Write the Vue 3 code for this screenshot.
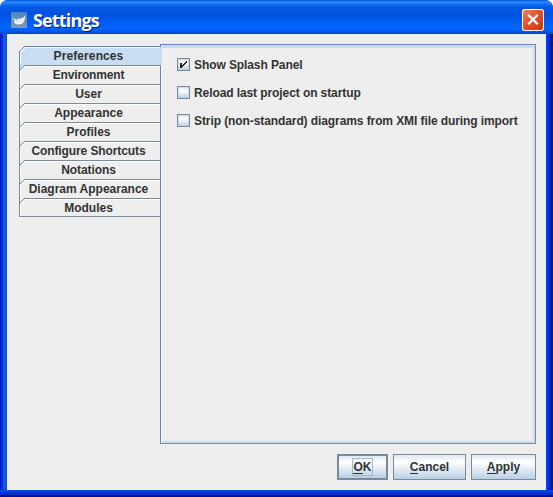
<script setup>
import { ref } from 'vue'

const tabs = [
  { name: 'Preferences', track: 0.1 },
  { name: 'Environment', track: -0.17 },
  { name: 'User', track: 0 },
  { name: 'Appearance', track: 0 },
  { name: 'Profiles', track: 0 },
  { name: 'Configure Shortcuts', track: -0.1 },
  { name: 'Notations', track: -0.1 },
  { name: 'Diagram Appearance', track: 0 },
  { name: 'Modules', track: 0 }
]
const active = ref(0)
const options = ref([
  { label: 'Show Splash Panel', on: true },
  { label: 'Reload last project on startup', on: false },
  { label: 'Strip (non-standard) diagrams from XMI file during import', on: false }
])
const buttons = [
  { key: 'O', rest: 'K', kind: 'ok' },
  { key: 'C', rest: 'ancel', kind: 'cancel' },
  { key: 'A', rest: 'pply', kind: 'apply' }
]
const isLast = i => i === tabs.length - 1
</script>

<template>
  <div class="window">
    <header class="titlebar">
      <svg class="app-icon" width="16" height="16" viewBox="0 0 16 16">
        <defs>
          <linearGradient id="ig" x1="0" y1="0" x2="0" y2="1">
            <stop offset="0" stop-color="#4d83c0" />
            <stop offset="1" stop-color="#7d9cb8" />
          </linearGradient>
        </defs>
        <rect width="16" height="16" rx="1" fill="url(#ig)" />
        <path d="M1 5.5 4 7 6 8.5 7 6 9 7.5 10.5 5.5 11.5 6.5 14.5 3 13.5 8.5 11.5 11.5 8 12.5 4.5 12 2.5 9.5 4 9Z" fill="#f4f6f5" />
        <path d="M5 9.5 8 10 11 8" stroke="#c4d2dc" stroke-width=".8" fill="none" />
      </svg>
      <h1>Settings</h1>
      <button class="close" aria-label="Close">
        <svg width="22" height="22" viewBox="0 0 22 22">
          <path d="M6.2 5.7 15.8 15.3M15.8 5.7 6.2 15.3" stroke="#fff" stroke-width="2.3" />
        </svg>
      </button>
    </header>
    <main class="client">
      <div class="body">
        <nav class="tabs">
          <div v-for="(t, i) in tabs" :key="t.name" class="tab" :class="{ active: i === active }" @click="active = i">
            <svg class="edge" width="143" height="19" viewBox="0 0 143 19" shape-rendering="crispEdges">
              <path v-if="i === active" class="fill" d="M1 24V6L6 1H143V19H6Z" />
              <path v-else class="fill" d="M1 19V6L6 1H141V19Z" />
              <path class="hi" d="M1.5 18V6.5L6.5 1.5H141" />
              <path class="line" :d="isLast(i) ? 'M141 18.5H.5V5.5L5.5 .5H141' : 'M.5 24V5.5L5.5 .5H141'" />
            </svg>
            <span :style="{ letterSpacing: t.track + 'px' }">{{ t.name }}</span>
          </div>
        </nav>
        <section class="panel">
          <label v-for="o in options" :key="o.label" class="option" @click="o.on = !o.on">
            <span class="box">
              <svg v-if="o.on" width="13" height="13" viewBox="0 0 13 13" shape-rendering="crispEdges">
                <path d="M3 5H5V7H6V6H7V5H8V4H9V3H10V5H9V6H8V7H7V8H6V9H5V10H3Z" fill="#222" />
              </svg>
            </span>
            <span class="text">{{ o.label }}</span>
          </label>
        </section>
      </div>
      <footer class="actions">
        <button v-for="b in buttons" :key="b.kind" class="btn" :class="b.kind">
          <span class="caption"><span class="key">{{ b.key }}</span>{{ b.rest }}</span>
        </button>
      </footer>
    </main>
  </div>
</template>

<style>
body {
  background: #fff;
}
</style>

<style scoped>
* {
  box-sizing: border-box;
}
.window {
  width: 553px;
  height: 497px;
  padding: 0 7px 7px;
  border-radius: 8px 8px 0 0;
  background:
    linear-gradient(to bottom, #0046e8 0 2px, #0030c8 2px 5px, #001292 5px 7px) 0 100% / 100% 7px no-repeat,
    linear-gradient(to right, #0011c0 0 1px, #0731d8 1px 3px, #1058e8 3px 6px, #0a4be0 6px) 0 34px / 7px 100% no-repeat,
    linear-gradient(to right, #0040f0 0 2px, #0030d0 2px 4px, #001698 4px 7px) 100% 34px / 7px 100% no-repeat,
    #0552e4;
  font: bold 12px/14px "Liberation Sans", Arial, sans-serif;
  color: #333;
  overflow: hidden;
}
.titlebar {
  height: 34px;
  margin: 0 -7px;
  padding: 6px 9px 0 11px;
  display: flex;
  align-items: center;
  background: linear-gradient(to bottom, #0550d8 0, #2c8cff 2px, #1272f8 4px, #0358e2 7px, #0052de 14px, #005cf2 22px, #0066ff 28px, #005cf0 31px, #003ebc 34px);
}
h1 {
  flex: 1;
  margin: 0 0 0 6px;
  font: bold 18px/26px "Open Sans", sans-serif;
  letter-spacing: -0.85px;
  color: #fff;
  text-shadow: 1px 1px 0 #0a1883;
}
.close {
  width: 22px;
  height: 22px;
  padding: 0;
  border: 0;
  border-radius: 3px;
  background: linear-gradient(135deg, #ee8a6a, #e2512b 45%, #c93807);
  box-shadow: inset 0 0 0 1px #fff;
}
.close svg {
  display: block;
}
.client {
  height: 456px;
  padding: 10px 10px 10px 12px;
  background: #eee;
}
.body {
  display: flex;
  height: 400px;
}
.tabs {
  width: 141px;
  padding-top: 2px;
}
.tab {
  position: relative;
  width: 141px;
  height: 19px;
  padding: 3px 2px 0 0;
  text-align: center;
}
.tab span {
  position: relative;
}
.edge {
  position: absolute;
  left: 0;
  top: 0;
  overflow: visible;
}
.fill {
  fill: #eee;
}
.hi {
  fill: none;
  stroke: #fff;
}
.line {
  fill: none;
  stroke: #7a8a99;
}
.active .fill {
  fill: #c8ddf2;
}
.active .line {
  stroke: #6382bf;
}
.panel {
  width: 376px;
  padding: 12px 0 0 16px;
  border: 1px solid #7a8a99;
  border-top-color: #6382bf;
  border-left-color: #6382bf;
  box-shadow: inset 1px 0 #fff, inset -2px -2px #c8ddf2, inset 0 3px #c8ddf2;
}
.option {
  display: flex;
  align-items: center;
  height: 15px;
  margin-bottom: 13px;
  letter-spacing: -0.09px;
}
.box {
  width: 13px;
  height: 13px;
  margin-right: 4px;
  border: 1px solid #7a8a99;
  background: linear-gradient(#dde8f3, #fff 35%, #b8cfe5);
  box-shadow: inset 0 0 0 1px rgba(184, 207, 229, 0.5);
}
.box svg {
  display: block;
  margin: -1px;
}
.actions {
  display: flex;
  justify-content: flex-end;
  gap: 5px;
  padding-top: 10px;
}
.btn {
  height: 26px;
  padding: 0;
  border: 1px solid #7a8a99;
  background: linear-gradient(#dde8f3, #fff 30%, #b8cfe5);
  font: inherit;
  color: inherit;
}
.ok {
  width: 51px;
  border-width: 2px;
}
.cancel {
  width: 73px;
}
.apply {
  width: 65px;
}
.caption {
  display: inline-block;
  line-height: 16px;
}
.ok .caption {
  border: 1px solid #a3b8cc;
}
.key {
  display: inline-block;
  height: 14px;
  line-height: 14px;
  border-bottom: 1px solid #333;
}
</style>
